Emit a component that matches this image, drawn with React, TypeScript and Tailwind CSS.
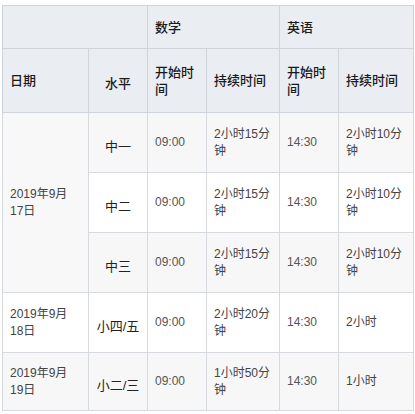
const font = { fontFamily: '"Liberation Sans", "Noto Sans CJK SC", sans-serif' };

type Row = {
  date?: string[];
  span?: number;
  level: string;
  mathDur: string[];
  engDur: string[];
  shade: boolean;
  h: string;
};

const rows: Row[] = [
  { date: ['2019年9月', '17日'], span: 3, level: '中一', mathDur: ['2小时15分', '钟'], engDur: ['2小时10分', '钟'], shade: true, h: 'h-[60px]' },
  { level: '中二', mathDur: ['2小时15分', '钟'], engDur: ['2小时10分', '钟'], shade: false, h: 'h-[60px]' },
  { level: '中三', mathDur: ['2小时15分', '钟'], engDur: ['2小时10分', '钟'], shade: true, h: 'h-[60px]' },
  { date: ['2019年9月', '18日'], span: 1, level: '小四/五', mathDur: ['2小时20分', '钟'], engDur: ['2小时'], shade: false, h: 'h-[60px]' },
  { date: ['2019年9月', '19日'], span: 1, level: '小二/三', mathDur: ['1小时50分', '钟'], engDur: ['1小时'], shade: true, h: 'h-[58px]' },
];

function Lines({ parts }: { parts: string[] }) {
  return (
    <>
      {parts.map((p, i) => (
        <span key={i}>
          {i > 0 && <br />}
          {p}
        </span>
      ))}
    </>
  );
}

// header cell base, alignment added per cell
const th = 'border border-[#cfd3da] bg-[#eaedf2] text-[13px] font-medium text-[#1a1a1a] align-middle px-[7px] leading-[17px]';
const td = 'border border-[#d6d9de] text-[12px] text-[#444] align-middle px-[7px] leading-[17px]';

export default function App() {
  return (
    <div className="bg-white w-[415px] h-[414px] pt-[5px] pl-[2px]" style={font}>
      <table className="border-collapse table-fixed w-[411px]">
        <colgroup>
          <col className="w-[86px]" />
          <col className="w-[59px]" />
          <col className="w-[59px]" />
          <col className="w-[73px]" />
          <col className="w-[59px]" />
          <col className="w-[75px]" />
        </colgroup>
        <thead>
          <tr className="h-[43px]">
            <th colSpan={2} className={`${th} text-left`}></th>
            <th colSpan={2} className={`${th} text-left`}>数学</th>
            <th colSpan={2} className={`${th} text-left`}>英语</th>
          </tr>
          <tr className="h-[64px]">
            <th className={`${th} text-left`}>日期</th>
            <th className={`${th} text-center pt-[6px]`}>水平</th>
            <th className={`${th} text-left`}>开始时<br />间</th>
            <th className={`${th} text-left`}>持续时间</th>
            <th className={`${th} text-left`}>开始时<br />间</th>
            <th className={`${th} text-left`}>持续时间</th>
          </tr>
        </thead>
        <tbody>
          {rows.map((r, i) => (
            <tr key={i} className={`${r.h} ${r.shade ? 'bg-[#f7f7f8]' : 'bg-white'}`}>
              {r.date && (
                <td rowSpan={r.span} className={`${td} text-[#333] ${r.span === 3 ? 'bg-[#f8f8f9]' : ''}`}>
                  <Lines parts={r.date} />
                </td>
              )}
              <td className="border border-[#d6d9de] text-center align-middle text-[13px] leading-[17px] text-[#222] pt-[7px]">
                {r.level}
              </td>
              <td className={`${td} text-[#555]`}>09:00</td>
              <td className={td}>
                <Lines parts={r.mathDur} />
              </td>
              <td className={`${td} text-[#555]`}>14:30</td>
              <td className={td}>
                <Lines parts={r.engDur} />
              </td>
            </tr>
          ))}
        </tbody>
      </table>
    </div>
  );
}
